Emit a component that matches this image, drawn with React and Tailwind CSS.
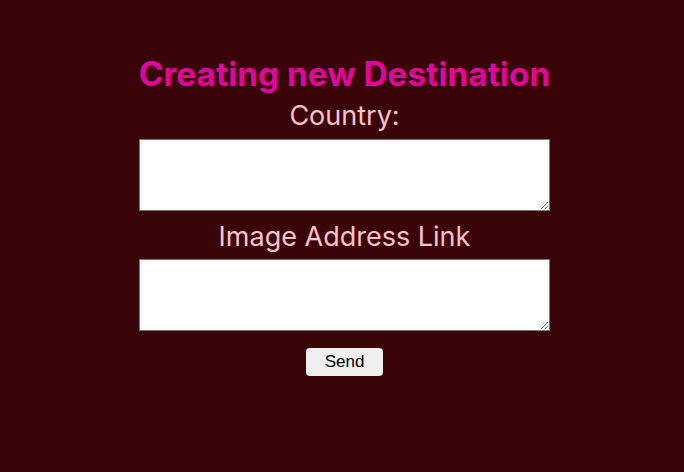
export default function App() {
  return (
    <div className="min-h-[472px] w-full bg-[#3a0509] flex flex-col items-center pt-[50px] pl-[5px] font-['Inter',sans-serif]">
      <h1 className="text-[33.4px] leading-[48px] font-bold text-[#e0069b]">Creating new Destination</h1>
      <label className="text-[27px] leading-[36px] text-[#ffc0cb]">Country:</label>
      <textarea className="mt-[5px] block w-[411px] h-[72px] bg-white border border-[#767676] resize" />
      <label className="mt-[8px] text-[27px] leading-[36px] text-[#ffc0cb]">Image Address Link</label>
      <textarea className="mt-[4px] block w-[411px] h-[72px] bg-white border border-[#767676] resize" />
      <button className="mt-[17px] w-[77px] h-[28px] bg-[#efefef] rounded-[4px] text-[17px] text-black font-['Liberation_Sans',Arial,sans-serif]">Send</button>
    </div>
  );
}
